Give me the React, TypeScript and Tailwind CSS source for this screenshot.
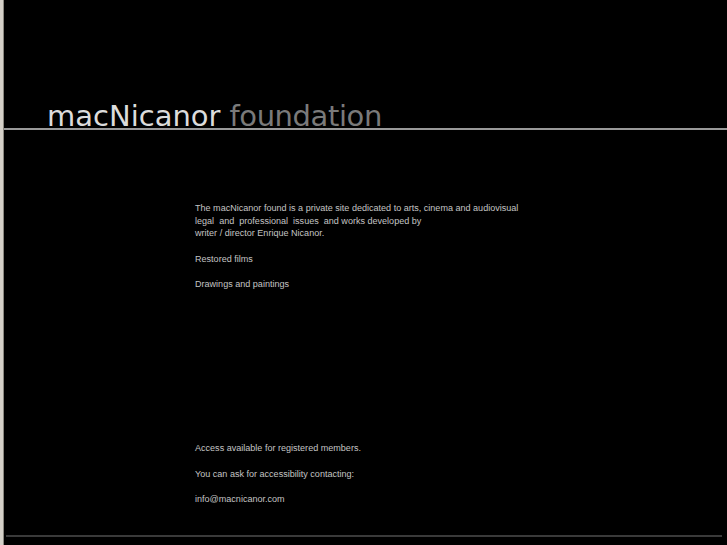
export default function App() {
  const body = "font-['Liberation_Sans',Arial,sans-serif]";
  return (
    <div className="flex h-[545px] w-[727px] overflow-hidden bg-black">
      <div className="w-[3px] shrink-0 bg-[#d4d0c8]" />
      <div className="w-[1px] shrink-0 bg-[#8a877f]" />
      <div className="flex flex-1 flex-col">
        <div className="flex h-[128px] items-end pl-[43px]">
          <div className="mb-[-3px] flex items-baseline gap-[9px] font-['DejaVu_Sans',sans-serif] text-[29px] leading-[29px]">
            <span className="text-[#dcdcdc]">macNicanor</span>
            <span className="tracking-[-0.4px] text-[#7a7a7a]">foundation</span>
          </div>
        </div>
        <div className="relative z-10 h-[2px] bg-[#9a9a9a]" />
        <div className={`${body} flex flex-col pl-[191px] pt-[72px] text-[9.05px] leading-[12.6px] text-[#c4c4c4]`}>
          <p>The macNicanor found is a private site dedicated to arts, cinema and audiovisual</p>
          <p className="whitespace-pre">legal  and  professional  issues  and works developed by</p>
          <p>writer / director Enrique Nicanor.</p>
          <p className="mt-[13px]">Restored films</p>
          <p className="mt-[12.5px]">Drawings and paintings</p>
          <p className="mt-[152px]">Access available for registered members.</p>
          <p className="mt-[13px]">You can ask for accessibility contacting:</p>
          <p className="mt-[12.5px]">info@macnicanor.com</p>
        </div>
        <div className="mt-auto mb-[8px] ml-[2px] mr-[5px] h-[2px] bg-[#3a3a3a]" />
      </div>
    </div>
  );
}
